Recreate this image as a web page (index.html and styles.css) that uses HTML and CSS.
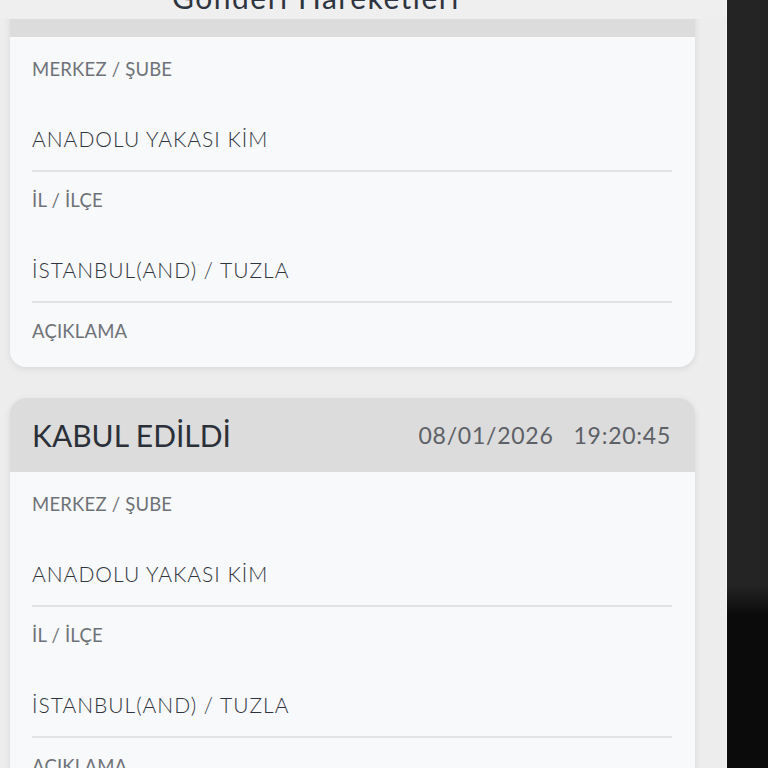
FILE: index.html
```html
<!DOCTYPE html>
<html lang="tr">
<head>
  <meta charset="UTF-8" />
  <meta name="viewport" content="width=device-width, initial-scale=1" />
  <title>Gönderi Hareketleri</title>
  <link rel="stylesheet" href="styles.css">
</head>
<body>

  <div class="screen">
    <div class="topbar">
      <h1 class="page-title">Gönderi Hareketleri</h1>
    </div>

    <div class="list">
      <div class="card">
        <div class="card-head">
          <span class="status">KABUL EDİLDİ</span>
          <span class="stamp">08/01/2026&nbsp;&nbsp;&nbsp;19:20:45</span>
        </div>
        <div class="card-body">
          <div class="field">
            <div class="label">MERKEZ / ŞUBE</div>
            <div class="value">ANADOLU YAKASI KİM</div>
            <div class="divider"></div>
          </div>
          <div class="field">
            <div class="label">İL / İLÇE</div>
            <div class="value">İSTANBUL(AND) / TUZLA</div>
            <div class="divider"></div>
          </div>
          <div class="field">
            <div class="label">AÇIKLAMA</div>
          </div>
        </div>
      </div>

      <div class="card">
        <div class="card-head">
          <span class="status">KABUL EDİLDİ</span>
          <span class="stamp">08/01/2026&nbsp;&nbsp;&nbsp;19:20:45</span>
        </div>
        <div class="card-body">
          <div class="field">
            <div class="label">MERKEZ / ŞUBE</div>
            <div class="value">ANADOLU YAKASI KİM</div>
            <div class="divider"></div>
          </div>
          <div class="field">
            <div class="label">İL / İLÇE</div>
            <div class="value">İSTANBUL(AND) / TUZLA</div>
            <div class="divider"></div>
          </div>
          <div class="field">
            <div class="label">AÇIKLAMA</div>
          </div>
        </div>
      </div>
    </div>
  </div>

</body>
</html>
```

FILE: styles.css
```css
body {
  margin: 0;
  font-family: Lato, "Noto Sans", sans-serif;
  background: linear-gradient(#242424 0, #242424 585px, #0b0b0b 615px, #0b0b0b 100%);
  height: 768px;
  overflow: hidden;
}

.screen {
  width: 726px;
  height: 768px;
  overflow: hidden;
  background-color: #ededed;
  border-right: 1px solid #f4f4f4;
}

.topbar {
  position: relative;
  z-index: 1;
  height: 19px;
  overflow: hidden;
  background-color: #efefef;
  display: flex;
  justify-content: center;
  padding-right: 94px;
}

.page-title {
  margin: -17px 0 0;
  font-size: 30px;
  line-height: 28px;
  font-weight: 400;
  letter-spacing: 1.5px;
  color: #2f3540;
}

.list {
  margin-top: -56px;
  padding: 0 31px 0 10px;
}

.card {
  background-color: #f8f9fa;
  border-radius: 16px;
  overflow: hidden;
  box-shadow: 0 2px 7px rgba(0, 0, 0, 0.09);
  margin-bottom: 31px;
}

.card-head {
  height: 74px;
  background-color: #dcdcdc;
  display: flex;
  align-items: center;
  justify-content: space-between;
  padding: 0 24px 0 22px;
}

.status {
  font-size: 30px;
  letter-spacing: 0;
  color: #2b3038;
}

.stamp {
  font-size: 23px;
  letter-spacing: 0.75px;
  color: #5d6167;
}

.card-body {
  padding: 4px 23px 24px 22px;
}

.field {
  padding-top: 16px;
}

.label {
  font-size: 18.5px;
  line-height: 24px;
  letter-spacing: 0.2px;
  color: #6e7278;
}

.value {
  margin-top: 44px;
  font-size: 21px;
  line-height: 28px;
  font-weight: 300;
  letter-spacing: 1px;
  color: #30353d;
}

.divider {
  margin-top: 17px;
  height: 2px;
  background-color: #e2e3e5;
}
```
